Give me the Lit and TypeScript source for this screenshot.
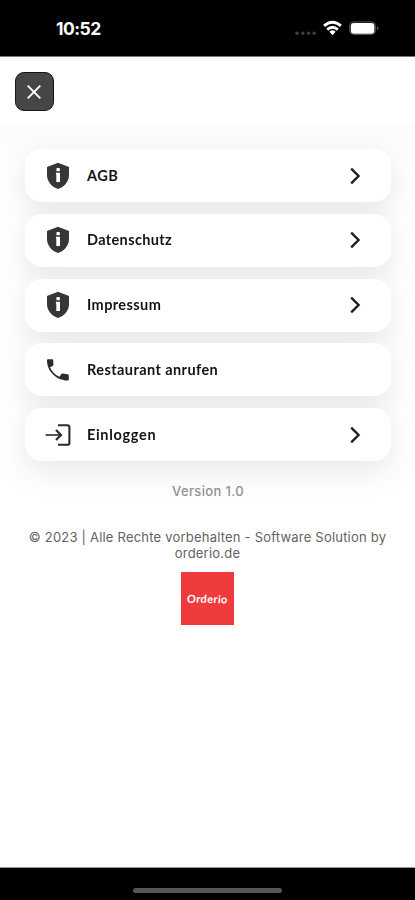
import { LitElement, html, css, svg, nothing } from "lit";
import { customElement } from "lit/decorators.js";

type IconName = "shield" | "phone" | "login";

interface MenuEntry {
  icon: IconName;
  label: string;
  spacing: number;
  chevron: boolean;
}

const ENTRIES: MenuEntry[] = [
  { icon: "shield", label: "AGB", spacing: 0.5, chevron: true },
  { icon: "shield", label: "Datenschutz", spacing: 0.36, chevron: true },
  { icon: "shield", label: "Impressum", spacing: 0.4, chevron: true },
  { icon: "phone", label: "Restaurant anrufen", spacing: 0.42, chevron: false },
  { icon: "login", label: "Einloggen", spacing: 0.68, chevron: true },
];

const ICONS = {
  shield: svg`
    <path d="M13 0.8 L24 5 V13 C24 19.6 19.2 25 13 27 C6.8 25 2 19.6 2 13 V5 Z" fill="#363636"/>
    <rect x="11.4" y="6" width="3.5" height="3.3" rx="0.8" fill="#fff"/>
    <path d="M10.9 10.8 H15 V20 H11.3 V12.6 H10.9 Z" fill="#fff"/>`,
  phone: svg`
    <path d="M3.2 3.2 H7.2 C7.9 3.2 8.2 3.6 8.2 4.2 L8.4 8.6 C8.4 9.3 8.2 9.6 7.7 9.9 L5 11.2 C7 15.8 10.2 19 14.6 20.8 L16.2 18.1 C16.5 17.7 16.9 17.5 17.5 17.6 L22.6 18.2 C23.4 18.4 23.8 18.8 23.8 19.5 V23.2 C23.8 24 23.4 24.4 22.6 24.4 C11.4 24.4 2 15.2 2 4.4 C2 3.7 2.5 3.2 3.2 3.2 Z" fill="#2c2c2c"/>`,
  login: svg`
    <path d="M13 4.2 H22.5 Q24.4 4.2 24.4 6.1 V21.9 Q24.4 23.8 22.5 23.8 H13" fill="none" stroke="#2b2b2b" stroke-width="2.1"/>
    <path d="M0.6 14 H15.4" fill="none" stroke="#555" stroke-width="2"/>
    <path d="M11 8.9 L16 14 L11 19.1" fill="none" stroke="#2b2b2b" stroke-width="2.2"/>`,
};

@customElement("status-bar")
class StatusBar extends LitElement {
  static styles = css`
    :host {
      display: flex;
      box-sizing: border-box;
      height: 57px;
      flex: none;
      background: #000;
      border-bottom: 1px solid #777;
      padding: 0 35px 0 56px;
      justify-content: space-between;
      align-items: center;
      color: #fff;
    }
    .time {
      font: 700 17.5px/22px Inter, sans-serif;
      letter-spacing: -0.55px;
      padding-top: 2px;
    }
    .signals {
      display: block;
      margin-top: 2px;
    }
  `;
  render() {
    return html`
      <span class="time">10:52</span>
      <svg class="signals" width="86" height="22" viewBox="294 18 86 22">
        <g fill="#404040">
          <circle cx="297" cy="33.2" r="1.7" />
          <circle cx="302.8" cy="33.2" r="1.7" />
          <circle cx="308.6" cy="33.2" r="1.7" />
          <circle cx="314.2" cy="33.2" r="1.7" />
        </g>
        <g fill="none" stroke="#fff" stroke-width="2.8">
          <path d="M324.1 25.9 Q332.5 18.7 340.9 25.9" />
          <path d="M327.2 29.6 Q332.5 25 337.8 29.6" />
        </g>
        <path d="M329.4 31.7 Q332.5 29 335.6 31.7 L332.5 35.2 Z" fill="#fff" />
        <rect x="349.6" y="21.9" width="26" height="12.6" rx="4" fill="none" stroke="#555" />
        <rect x="350.8" y="22.9" width="23.6" height="10.8" rx="3" fill="#fff" />
        <path d="M377.3 26.2 Q379.8 28.2 377.3 30.4 Z" fill="#777" />
      </svg>
    `;
  }
}

@customElement("menu-card")
class MenuCard extends LitElement {
  static properties = { entry: { attribute: false } };
  declare entry: MenuEntry;

  static styles = css`
    :host {
      display: flex;
      box-sizing: border-box;
      height: 53px;
      align-items: center;
      padding: 0 29px 0 20px;
      border-radius: 17px;
      background: #fff;
    }
    .icon {
      width: 26px;
      height: 28px;
      margin-right: 16px;
      flex: none;
    }
    .label {
      flex: 1;
      font: 700 14.5px/20px Lato, sans-serif;
      color: #141414;
      white-space: nowrap;
    }
    .chevron {
      flex: none;
    }
  `;
  render() {
    const e = this.entry;
    return html`
      <svg class="icon" viewBox="0 0 26 28">${ICONS[e.icon]}</svg>
      <span class="label" style="letter-spacing:${e.spacing}px">${e.label}</span>
      ${e.chevron
        ? html`<svg class="chevron" width="14" height="18" viewBox="0 0 14 18">
            <path d="M3.2 1.6 L10.6 9 L3.2 16.4" fill="none" stroke="#1c1c1c" stroke-width="2.3" />
          </svg>`
        : nothing}
    `;
  }
}

@customElement("app-root")
class AppRoot extends LitElement {
  static styles = css`
    :host {
      display: flex;
      flex-direction: column;
      height: 900px;
      background: #fff;
      overflow: hidden;
    }
    .header {
      flex: none;
      height: 68px;
      box-sizing: border-box;
      padding: 15px 15px 0;
    }
    .close {
      display: flex;
      box-sizing: border-box;
      width: 39px;
      height: 39px;
      padding: 0 1px 0 0;
      align-items: center;
      justify-content: center;
      border: 1.5px solid #161616;
      border-radius: 9px;
      background: #464646;
    }
    .content {
      flex: 1;
      display: flex;
      flex-direction: column;
      align-items: center;
      overflow: hidden;
      background: linear-gradient(#fbfbfb, #fefefe 40px, #fff 80px);
    }
    .cards {
      display: flex;
      flex-direction: column;
      align-self: stretch;
      gap: 11.75px;
      margin: 24px 24.5px 0 25px;
      filter: drop-shadow(0 10px 15px rgba(0, 0, 0, 0.095));
    }
    .version {
      margin-top: 19.5px;
      font: 500 13px/20px Inter, sans-serif;
      letter-spacing: 0.35px;
      color: #929292;
      padding-left: 1px;
    }
    .legal {
      margin-top: 28px;
      font: 400 13px/16.5px Inter, sans-serif;
      letter-spacing: 0.21px;
      color: #626262;
      text-align: center;
      white-space: nowrap;
    }
    .logo {
      display: flex;
      width: 53px;
      height: 53px;
      margin-top: 10px;
      align-items: center;
      justify-content: center;
      background: #f03b3e;
      color: #fff;
      font: 700 11px/16px Lato, sans-serif;
      letter-spacing: 0.4px;
    }
    .word {
      padding-top: 1px;
      transform: rotate(1deg) skewX(-3deg);
    }
    .footer {
      display: flex;
      flex: none;
      box-sizing: border-box;
      height: 33px;
      border-top: 1px solid #999;
      background: #000;
      justify-content: center;
      padding-top: 20px;
    }
    .home {
      width: 149px;
      height: 5px;
      border-radius: 3px;
      background: #555;
    }
  `;
  render() {
    return html`
      <status-bar></status-bar>
      <div class="header">
        <button class="close" aria-label="Schließen">
          <svg width="16" height="16" viewBox="0 0 16 16">
            <path d="M1.7 1.7 L14.3 14.3 M14.3 1.7 L1.7 14.3" stroke="#fff" stroke-width="1.9" />
          </svg>
        </button>
      </div>
      <div class="content">
        <div class="cards">
          ${ENTRIES.map((e) => html`<menu-card .entry=${e}></menu-card>`)}
        </div>
        <div class="version">Version 1.0</div>
        <div class="legal">
          © 2023 | Alle Rechte vorbehalten - Software Solution by<br />orderio.de
        </div>
        <div class="logo"><span class="word">Orderio</span></div>
      </div>
      <div class="footer"><div class="home"></div></div>
    `;
  }
}
